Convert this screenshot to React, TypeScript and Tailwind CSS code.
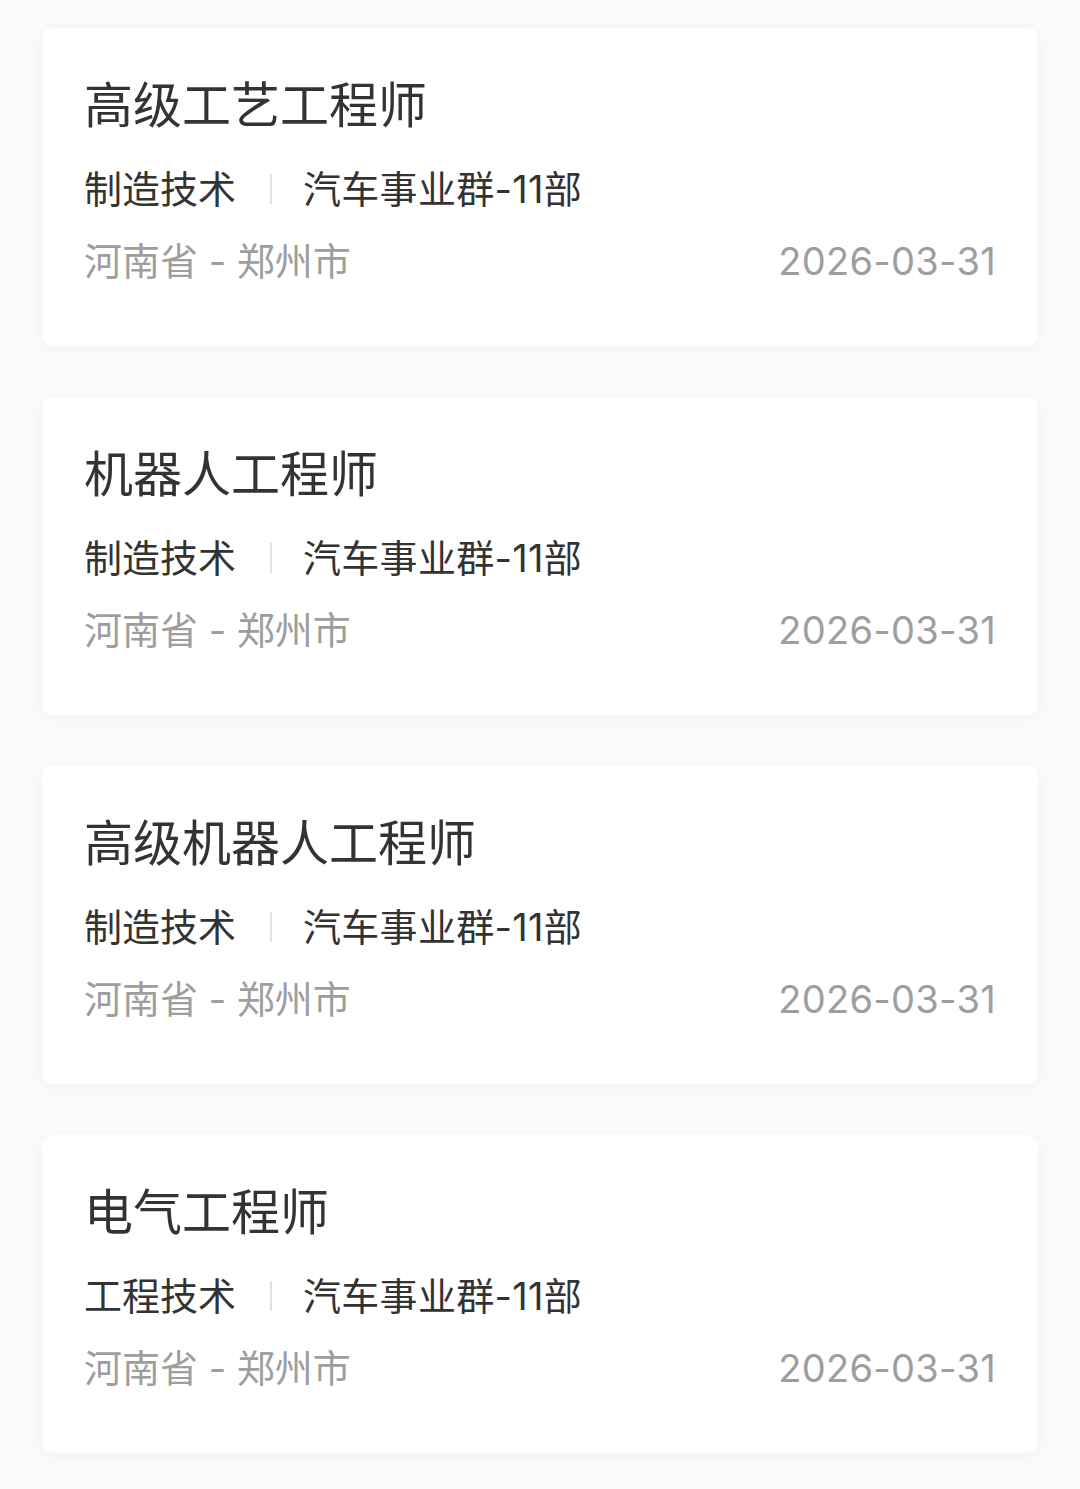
import React from "react";

const jobs = [
  { title: "高级工艺工程师", cat: "制造技术" },
  { title: "机器人工程师", cat: "制造技术" },
  { title: "高级机器人工程师", cat: "制造技术" },
  { title: "电气工程师", cat: "工程技术" },
];

export default function App() {
  return (
    <div
      className="min-h-[1489px] w-[1080px] bg-[#fafafa] pt-[28px] px-[42px] flex flex-col gap-[51px]"
      style={{ fontFamily: '"Inter", "Noto Sans CJK SC", sans-serif' }}
    >
      {jobs.map((j, i) => (
        <div
          key={i}
          className="h-[318px] bg-white rounded-[10px] shadow-[0_2px_14px_rgba(0,0,0,0.035)] px-[42px] pt-[49px] flex flex-col"
        >
          <div className="h-[58px] leading-[58px] text-[49px] text-[#333333]">
            {j.title}
          </div>
          <div className="mt-[29px] h-[50px] flex items-center text-[38px] text-[#333333]">
            <span>{j.cat}</span>
            <span className="ml-[34px] mr-[31px] w-[2px] h-[30px] bg-[#e2e2e2]" />
            <span className="tracking-[0.3px]">汽车事业群-11部</span>
          </div>
          <div className="mt-[22px] h-[50px] flex items-center justify-between text-[38px] text-[#9e9e9e]">
            <span>河南省 - 郑州市</span>
            <span className="tracking-[0.3px]">2026-03-31</span>
          </div>
        </div>
      ))}
    </div>
  );
}
